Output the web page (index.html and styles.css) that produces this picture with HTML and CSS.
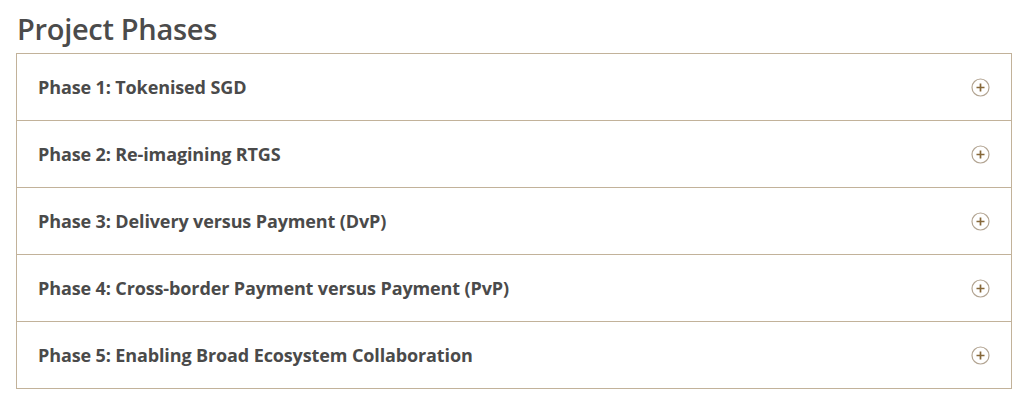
FILE: index.html
```html
<!DOCTYPE html>
<html lang="en">
<head>
<meta charset="utf-8">
<title>Project Phases</title>
<link rel="stylesheet" href="styles.css">
</head>
<body>
<div class="page">
  <h2 class="title">Project Phases</h2>
  <div class="accordion">
    <div class="item"><span class="label">Phase 1: Tokenised SGD</span><svg class="icon" viewBox="0 0 19 19"><circle cx="9.5" cy="9.5" r="8.5" fill="none" stroke="#b3a593" stroke-width="1.2"/><path d="M9.5 5.5v8M5.5 9.5h8" stroke="#86683a" stroke-width="1.7"/></svg></div>
    <div class="item"><span class="label">Phase 2: Re-imagining RTGS</span><svg class="icon" viewBox="0 0 19 19"><circle cx="9.5" cy="9.5" r="8.5" fill="none" stroke="#b3a593" stroke-width="1.2"/><path d="M9.5 5.5v8M5.5 9.5h8" stroke="#86683a" stroke-width="1.7"/></svg></div>
    <div class="item"><span class="label">Phase 3: Delivery versus Payment (DvP)</span><svg class="icon" viewBox="0 0 19 19"><circle cx="9.5" cy="9.5" r="8.5" fill="none" stroke="#b3a593" stroke-width="1.2"/><path d="M9.5 5.5v8M5.5 9.5h8" stroke="#86683a" stroke-width="1.7"/></svg></div>
    <div class="item"><span class="label">Phase 4: Cross-border Payment versus Payment (PvP)</span><svg class="icon" viewBox="0 0 19 19"><circle cx="9.5" cy="9.5" r="8.5" fill="none" stroke="#b3a593" stroke-width="1.2"/><path d="M9.5 5.5v8M5.5 9.5h8" stroke="#86683a" stroke-width="1.7"/></svg></div>
    <div class="item"><span class="label">Phase 5: Enabling Broad Ecosystem Collaboration</span><svg class="icon" viewBox="0 0 19 19"><circle cx="9.5" cy="9.5" r="8.5" fill="none" stroke="#b3a593" stroke-width="1.2"/><path d="M9.5 5.5v8M5.5 9.5h8" stroke="#86683a" stroke-width="1.7"/></svg></div>
  </div>
</div>
</body>
</html>
```
FILE: styles.css
```css
html, body {
  margin: 0;
  padding: 0;
  background: #ffffff;
}
.page {
  padding: 10px 12px 0 16px;
  font-family: "Open Sans", "Liberation Sans", sans-serif;
  color: #4a4a4a;
}
.title {
  margin: 0 0 6px 1px;
  font-family: "Open Sans", "Lato", sans-serif;
  font-size: 29px;
  line-height: 37px;
  font-weight: 600;
  letter-spacing: -0.3px;
  color: #4b4b4b;
}
.accordion {
  border: 1px solid #c2b29a;
}
.item {
  display: flex;
  align-items: center;
  justify-content: space-between;
  height: 66px;
  padding: 0 21px 0 21px;
  border-top: 1px solid #c2b29a;
}
.item:first-child {
  border-top: none;
}
.label {
  font-size: 18px;
  font-weight: 700;
  letter-spacing: -0.12px;
  color: #4a4a4a;
}
.icon {
  width: 19px;
  height: 19px;
}
```
